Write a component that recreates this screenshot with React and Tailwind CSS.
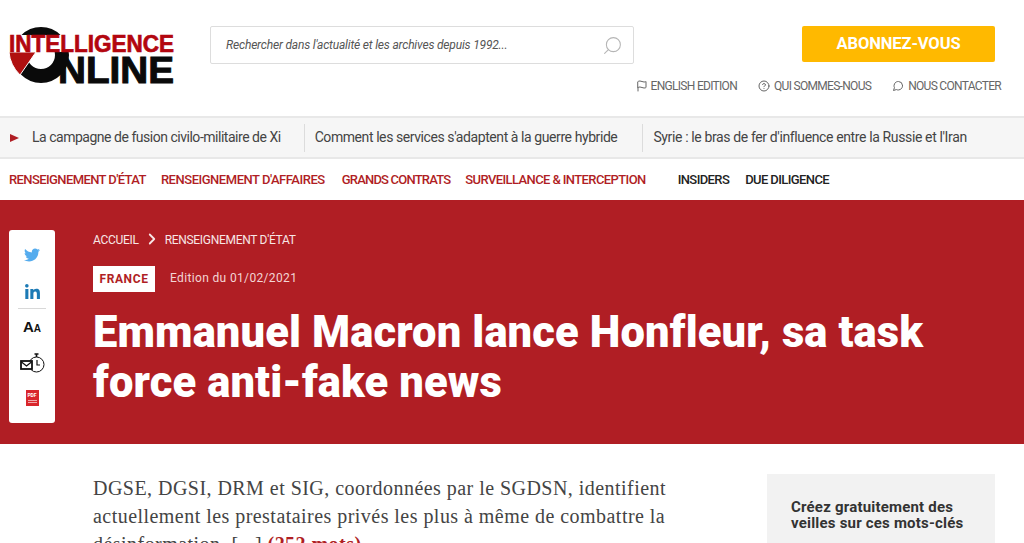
import React from 'react';
import { FaTwitter, FaLinkedinIn } from 'react-icons/fa';
import { FiSearch, FiFlag, FiHelpCircle, FiMessageCircle, FiChevronRight } from 'react-icons/fi';

const roboto = { fontFamily: 'Roboto, sans-serif' };

function Logo() {
  return (
    <svg width="168" height="62" viewBox="0 0 168 62" className="block">
      <circle cx="32" cy="31" r="21" fill="none" stroke="#0a0a0a" strokeWidth="14" />
      <path d="M0 28 L27 28 L11 51 Q1 41 0 28 Z" fill="#b01010" stroke="#fff" strokeWidth="1" />
      <rect x="0" y="11" width="165" height="17" fill="#fff" />
      <text x="0" y="28" fontFamily="Liberation Sans, sans-serif" fontWeight="700" fontSize="23.5" fill="#b3060f" stroke="#b3060f" strokeWidth="0.7" textLength="165" lengthAdjust="spacingAndGlyphs">INTELLIGENCE</text>
      <text x="49" y="59" fontFamily="Liberation Sans, sans-serif" fontWeight="700" fontSize="37" fill="#0a0a0a" stroke="#0a0a0a" strokeWidth="1" textLength="116" lengthAdjust="spacingAndGlyphs">NLINE</text>
    </svg>
  );
}

function MailClock() {
  return (
    <svg width="25" height="22" viewBox="0 0 25 22" fill="none" stroke="#111">
      <circle cx="16.5" cy="12.5" r="7.5" strokeWidth="1" />
      <path d="M17 8 V13 H20" strokeWidth="1.2" />
      <path d="M14.5 2 H18.5 M16.5 2 V5" strokeWidth="1.6" />
      <rect x="1" y="9" width="11" height="8" fill="#fff" strokeWidth="1.8" />
      <path d="M1.5 10 L6.5 14 L11.5 10" strokeWidth="1.3" />
    </svg>
  );
}

function PdfIcon() {
  return (
    <div className="w-[13px] h-[16px] bg-[#d9262c] flex flex-col items-center pt-[3px]">
      <span className="text-[5px] leading-[5px] font-bold text-white" style={roboto}>PDF</span>
      <span className="w-[9px] h-px bg-white/60 mt-[2px]" />
      <span className="w-[9px] h-px bg-white/60 mt-px" />
    </div>
  );
}

export default function App() {
  return (
    <div className="w-[1024px] h-[543px] overflow-hidden bg-white whitespace-nowrap" style={roboto}>
      {/* Entete */}
      <div className="h-[116px] flex pl-[9px]">
        <div className="pt-[24px] w-[201px] shrink-0"><Logo /></div>
        <div className="mt-[26px] w-[424px] h-[38px] shrink-0 border border-[#dddddd] rounded-[2px] flex items-center justify-between pl-[15px] pr-[10px]">
          <span className="italic text-[12px] text-[#555] tracking-[-0.18px]">Rechercher dans l'actualité et les archives depuis 1992...</span>
          <FiSearch size={21} className="text-[#b5b5b5] -scale-x-100" strokeWidth={1.2} />
        </div>
        <div className="flex-1 flex flex-col items-end">
          <div className="mt-[26px] mr-[29px] w-[193px] h-[36px] rounded-[2px] bg-[#ffb900] flex items-center justify-center text-white font-bold text-[16.5px] tracking-[-0.1px]">ABONNEZ-VOUS</div>
          <div className="mt-[15px] mr-[23px] flex items-center text-[12px] tracking-[-0.7px] text-[#666]">
            <FiFlag size={12} className="mr-[3px]" />
            <span>ENGLISH EDITION</span>
            <FiHelpCircle size={12} className="ml-[21px] mr-[4px]" />
            <span>QUI SOMMES-NOUS</span>
            <FiMessageCircle size={12} className="ml-[21px] mr-[4px]" />
            <span>NOUS CONTACTER</span>
          </div>
        </div>
      </div>

      {/* Fil d'actualite */}
      <div className="h-[43px] bg-[#f6f6f6] border-y-2 border-[#e8e8e8] flex items-center text-[14px] text-[#444]">
        <span className="ml-[10px] w-0 h-0 border-y-[4.5px] border-y-transparent border-l-[9px] border-l-[#b01e24]" />
        <span className="ml-[13px] tracking-[-0.48px]">La campagne de fusion civilo-militaire de Xi</span>
        <span className="ml-[23px] h-[28px] w-px bg-[#dcdcdc]" />
        <span className="ml-[10px] tracking-[-0.42px]">Comment les services s'adaptent à la guerre hybride</span>
        <span className="ml-[25px] h-[28px] w-px bg-[#dcdcdc]" />
        <span className="ml-[10px] tracking-[-0.37px]">Syrie : le bras de fer d'influence entre la Russie et l'Iran</span>
      </div>

      {/* Navigation */}
      <div className="h-[41px] pl-[9px] flex items-center text-[13px] font-medium tracking-[-0.6px]">
        <span className="text-[#b01e24]">RENSEIGNEMENT D'ÉTAT</span>
        <span className="text-[#b01e24] ml-[15px] tracking-[-0.47px]">RENSEIGNEMENT D'AFFAIRES</span>
        <span className="text-[#b01e24] ml-[17px] tracking-[-0.8px]">GRANDS CONTRATS</span>
        <span className="text-[#b01e24] ml-[15px]">SURVEILLANCE & INTERCEPTION</span>
        <span className="text-[#222] ml-[32px]">INSIDERS</span>
        <span className="text-[#222] ml-[16px]">DUE DILIGENCE</span>
      </div>

      {/* Bandeau article */}
      <div className="h-[244px] bg-[#b01e24] flex pl-[9px]">
        <div className="mt-[30px] w-[46px] h-[193px] bg-white rounded-[3px] flex flex-col items-center">
          <FaTwitter size={16} className="text-[#55acee] mt-[17px]" />
          <FaLinkedinIn size={17} className="text-[#1c7ab5] mt-[21px]" />
          <span className="w-[28px] h-px bg-[#d8d8d8] mt-[7px]" />
          <span className="mt-[10px] font-black text-[#111] leading-none" style={{ fontFamily: 'Liberation Sans, sans-serif' }}>
            <span className="text-[15px]">A</span><span className="text-[10px]">A</span>
          </span>
          <div className="mt-[17px]"><MailClock /></div>
          <div className="mt-[16px]"><PdfIcon /></div>
        </div>
        <div className="ml-[38px] pt-[32px] flex-1">
          <div className="flex items-center text-[12px] text-[#f7e6e6] tracking-[-0.3px] h-[16px]">
            <span>ACCUEIL</span>
            <FiChevronRight size={18} strokeWidth={2.4} className="mx-[4px] mb-[2px]" />
            <span>RENSEIGNEMENT D'ÉTAT</span>
          </div>
          <div className="flex items-center mt-[18px]">
            <span className="w-[62px] h-[26px] bg-white text-[#b01e24] text-[12px] font-bold tracking-[0.6px] flex items-center justify-center">FRANCE</span>
            <span className="ml-[15px] text-[12px] text-[#f3d5d5] tracking-[0.35px] mb-[2px]">Edition du 01/02/2021</span>
          </div>
          <h1 className="mt-[16px] w-[860px] whitespace-normal text-white text-[43.5px] leading-[50px] font-black tracking-[0.12px]">Emmanuel Macron lance Honfleur, sa task force anti-fake news</h1>
        </div>
      </div>

      {/* Corps */}
      <div className="flex pl-[93px] pt-[30px]">
        <p className="w-[590px] whitespace-normal text-[20px] leading-[28px] tracking-[0.46px] text-[#444]" style={{ fontFamily: 'Liberation Serif, serif' }}>
          DGSE, DGSI, DRM et SIG, coordonnées par le SGDSN, identifient actuellement les prestataires privés les plus à même de combattre la désinformation. [...] <span className="text-[#b01e24] font-bold">(252 mots)</span>
        </p>
        <div className="ml-[84px] w-[228px] h-[80px] bg-[#f2f2f2] pl-[24px] pt-[25px] text-[15px] leading-[16px] font-bold tracking-[0.2px] text-[#333]">
          Créez gratuitement des<br />veilles sur ces mots-clés
        </div>
      </div>
    </div>
  );
}
